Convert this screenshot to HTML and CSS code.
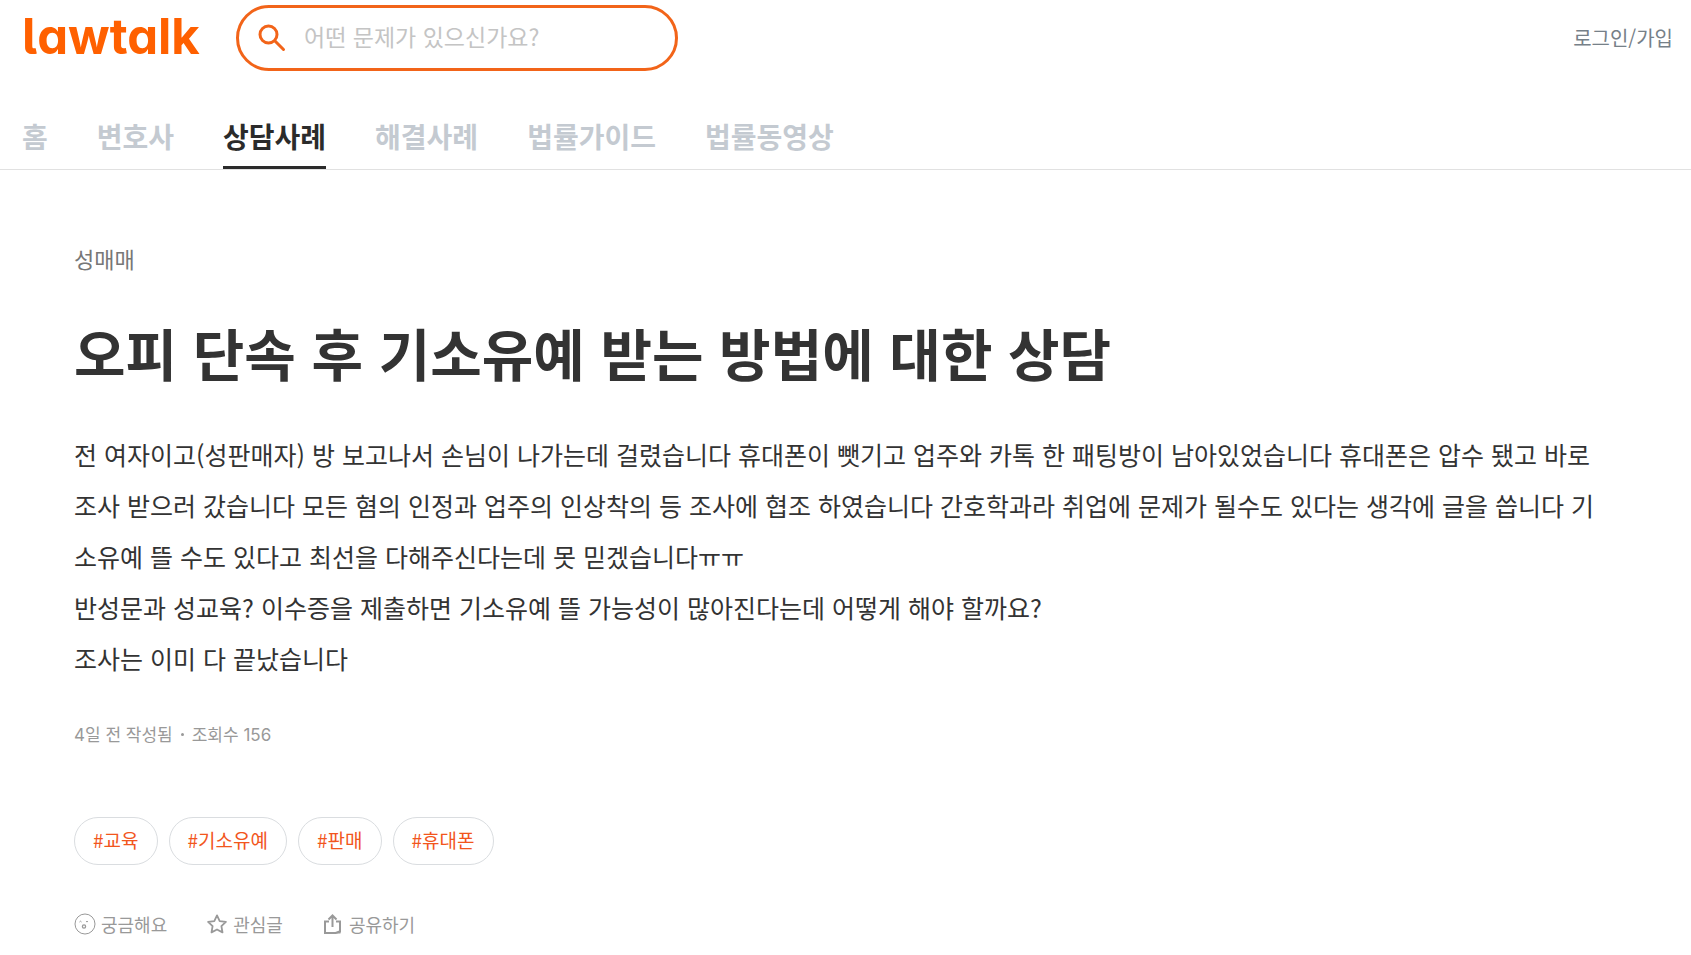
FILE: index.html
```html
<!DOCTYPE html>
<html lang="ko">
<head>
<meta charset="utf-8">
<meta name="viewport" content="width=device-width, initial-scale=1">
<title>lawtalk</title>
<link rel="stylesheet" href="styles.css">
</head>
<body>
<header class="header">
  <div class="topbar">
    <a class="logo" href="#"><span class="logo-tail">l</span>awtalk</a>
    <form class="search" role="search">
      <button class="search-button" type="submit" aria-label="검색">
        <svg width="28" height="28" viewBox="0 0 28 28" fill="none" stroke="currentColor" stroke-width="3" stroke-linecap="round"><circle cx="10.5" cy="10.5" r="8.5"/><path d="M17 17l8.500 8.500"/></svg>
      </button>
      <input class="search-input" type="text" aria-label="검색어" placeholder="어떤 문제가 있으신가요?">
    </form>
    <a class="login" href="#">로그인/가입</a>
  </div>
  <nav class="nav">
    <a class="nav-link" href="#">홈</a>
    <a class="nav-link" href="#">변호사</a>
    <a class="nav-link nav-active" href="#" aria-current="page">상담사례</a>
    <a class="nav-link" href="#">해결사례</a>
    <a class="nav-link" href="#">법률가이드</a>
    <a class="nav-link" href="#">법률동영상</a>
  </nav>
</header>
<main class="content">
  <p class="category">성매매</p>
  <h1 class="title">오피 단속 후 기소유예 받는 방법에 대한 상담</h1>
  <p class="body">전 여자이고(성판매자) 방 보고나서 손님이 나가는데 걸렸습니다 휴대폰이 뺏기고 업주와 카톡 한 패팅방이 남아있었습니다 휴대폰은 압수 됐고 바로 조사 받으러 갔습니다 모든 혐의 인정과 업주의 인상착의 등 조사에 협조 하였습니다 간호학과라 취업에 문제가 될수도 있다는 생각에 글을 씁니다 기소유예 뜰 수도 있다고 최선을 다해주신다는데 못 믿겠습니다ㅠㅠ<br>반성문과 성교육? 이수증을 제출하면 기소유예 뜰 가능성이 많아진다는데 어떻게 해야 할까요?<br>조사는 이미 다 끝났습니다</p>
  <div class="meta"><span><span class="num">4</span>일 전 작성됨</span><span class="dot"></span><span>조회수 <span class="num">156</span></span></div>
  <div class="tags">
    <a class="tag" href="#">#교육</a>
    <a class="tag" href="#">#기소유예</a>
    <a class="tag" href="#">#판매</a>
    <a class="tag" href="#">#휴대폰</a>
  </div>
  <div class="actions">
    <button class="action" type="button">
      <svg width="22" height="22" viewBox="0 0 22 22" fill="none" stroke="currentColor"><circle cx="11" cy="11" r="10"/><circle cx="10" cy="13.5" r="1.6" stroke-width="1.3"/><path d="M5.5 9l1-.8 1 .8M12 9l1-.8 1 .8"/></svg>궁금해요</button>
    <button class="action" type="button">
      <svg width="22" height="22" viewBox="0 0 22 22" fill="none" stroke="currentColor" stroke-width="1.8" stroke-linejoin="round"><path d="M11 2.4l2.7 5.7 6.2.8-4.5 4.3 1.1 6.2L11 16.5l-5.500 2.900 1.100-6.200L2.100 8.900l6.200-.8z"/></svg>관심글</button>
    <button class="action" type="button">
      <svg width="22" height="22" viewBox="0 0 22 22" fill="none" stroke="currentColor" stroke-width="2"><path d="M7 8.500H3V20h10.500l4.500-1.500V8.500h-4M10.500 14V3M6.500 6.500l4-4 4 4"/><path d="M13 20.500l5.500-4v4z" fill="currentColor" stroke="none"/></svg>공유하기</button>
  </div>
</main>
</body>
</html>
```
FILE: styles.css
```css
* { box-sizing: border-box; }
body {
  margin: 0;
  background: #fff;
  color: #333;
  font-family: "Noto Sans CJK KR", "Noto Sans", sans-serif;
}
a { color: inherit; text-decoration: none; }
button { border: 0; padding: 0; background: none; font: inherit; color: inherit; cursor: pointer; }
svg { display: block; flex: none; }

.header { border-bottom: 1px solid #e1e1e1; }
.topbar { display: flex; align-items: center; padding: 5px 18px 0 22px; }
.logo {
  width: 214px;
  padding-bottom: 2px;
  color: #ff6000;
  font-family: Inter, sans-serif;
  font-size: 49px;
  font-weight: 700;
  line-height: 64px;
  font-feature-settings: "cv11";
}
.logo-tail { font-feature-settings: "cv05"; }
.search {
  display: flex;
  align-items: center;
  gap: 18px;
  width: 442px;
  height: 66px;
  padding: 0 19px;
  border: 3px solid #f26419;
  border-radius: 33px;
}
.search-button { color: #f26419; }
.search-input {
  flex: 1;
  min-width: 0;
  padding: 0 0 4px;
  border: 0;
  outline: 0;
  background: none;
  font: inherit;
  font-size: 23px;
  line-height: 32px;
}
.search-input::placeholder { color: #c4c4c4; opacity: 1; }
.login { margin-left: auto; padding-bottom: 2px; font-size: 20px; color: #768088; }

.nav { display: flex; gap: 49px; padding: 42px 22px 0; }
.nav-link {
  padding-bottom: 7px;
  border-bottom: 3px solid transparent;
  color: #c4cad1;
  font-size: 28px;
  font-weight: 700;
  line-height: 46px;
}
.nav-active { color: #2b2b2b; border-color: #2b2b2b; }

.content { padding: 72px 80px 16px 74px; }
.category { margin: 0; font-size: 22px; line-height: 32px; color: #777; }
.title { margin: 40px 0 0; font-size: 56px; font-weight: 700; line-height: 76px; }
.body { margin: 39px 0 0; font-size: 25px; line-height: 51px; }
.meta { display: flex; align-items: center; margin-top: 38px; font-size: 17px; line-height: 24px; color: #999; }
.num { font-family: Inter, sans-serif; }
.dot { width: 3px; height: 3px; margin: 0 8px; border-radius: 50%; background: #999; }
.tags { display: flex; flex-wrap: wrap; gap: 11px; margin-top: 70px; }
.tag {
  padding: 0 18px 2px;
  border: 1px solid #dadde0;
  border-radius: 24px;
  color: #f2561d;
  font-size: 19px;
  line-height: 44px;
}
.actions { display: flex; gap: 39px; margin-top: 45px; color: #999; font-size: 18px; line-height: 28px; }
.action { display: flex; align-items: center; gap: 5px; }
```
